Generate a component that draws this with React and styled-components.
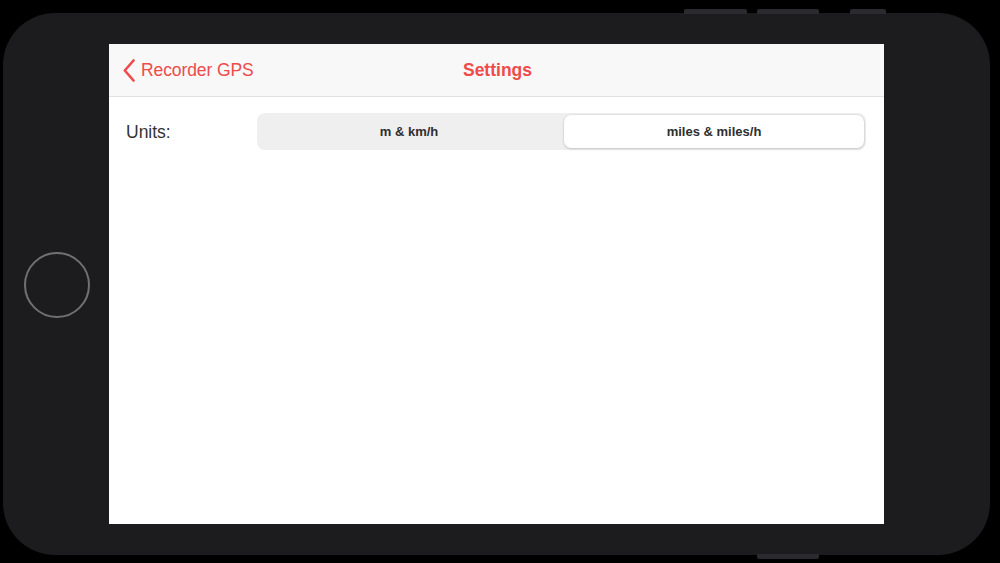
import React, { useState } from "react";
import styled, { createGlobalStyle } from "styled-components";

const Global = createGlobalStyle`
  html, body { margin: 0; padding: 0; background: #000; }
  body { width: 1000px; height: 563px; overflow: hidden; font-family: "Liberation Sans", Arial, sans-serif; }
  * { box-sizing: border-box; }
`;

const Stage = styled.div`
  width: 1000px;
  height: 563px;
  background: #000;
  padding: 13px 10px 8px 3px;
`;

const Body = styled.div`
  position: relative;
  width: 987px;
  height: 542px;
  background: #1c1b1e;
  border-radius: 52px;
  display: flex;
  align-items: stretch;
`;

const HwButton = styled.div`
  position: absolute;
  height: 5px;
  background: #2b2a2e;
  border-radius: 2px 2px 0 0;
  left: ${(p) => p.$left}px;
  width: ${(p) => p.$width}px;
  ${(p) => (p.$bottom ? "bottom: -4px; border-radius: 0 0 2px 2px;" : "top: -4px;")}
`;

const HomeColumn = styled.div`
  width: 106px;
  display: flex;
  align-items: center;
  justify-content: center;
  padding: 2px 0 0 2px;
`;

const HomeButton = styled.div`
  width: 66px;
  height: 66px;
  border-radius: 50%;
  border: 2.5px solid #707072;
`;

const Screen = styled.div`
  margin: 31px 0;
  width: 775px;
  background: #fff;
  display: flex;
  flex-direction: column;
`;

const NavBar = styled.div`
  height: 53px;
  background: #f8f8f8;
  border-bottom: 1px solid #e2e2e2;
  display: grid;
  grid-template-columns: 1fr auto 1fr;
  align-items: center;
  padding: 0 12px 0 14px;
`;

const BackButton = styled.div`
  display: flex;
  align-items: center;
  gap: 6px;
  color: #ee4b4b;
  font-size: 17.5px;
  letter-spacing: -0.1px;
`;

const Title = styled.div`
  color: #ee4b4b;
  font-size: 17.5px;
  font-weight: 700;
`;

const Content = styled.div`
  padding: 16px 18px 0 17px;
`;

const Row = styled.div`
  display: flex;
  align-items: center;
`;

const Label = styled.div`
  width: 131px;
  font-size: 17.5px;
  color: #333;
  padding-top: 2px;
`;

const Segmented = styled.div`
  flex: 1;
  height: 37px;
  background: #efeff0;
  border-radius: 8px;
  padding: 2px;
  display: grid;
  grid-template-columns: 1fr 1fr;
  gap: 5px;
`;

const Segment = styled.div`
  display: flex;
  align-items: center;
  justify-content: center;
  border-radius: 7px;
  font-size: 13px;
  font-weight: 700;
  color: #2e2e2e;
  cursor: pointer;
  background: ${(p) => (p.$active ? "#fff" : "transparent")};
  box-shadow: ${(p) => (p.$active ? "0 1px 3px rgba(0,0,0,0.16), 0 0 0 0.5px rgba(0,0,0,0.06)" : "none")};
`;

export default function App() {
  const [unit, setUnit] = useState(1);
  const options = ["m & km/h", "miles & miles/h"];
  return (
    <>
      <Global />
      <Stage>
        <Body>
          <HwButton $left={681} $width={63} />
          <HwButton $left={754} $width={62} />
          <HwButton $left={847} $width={36} />
          <HwButton $left={754} $width={62} $bottom />
          <HomeColumn>
            <HomeButton />
          </HomeColumn>
          <Screen>
            <NavBar>
              <BackButton>
                <svg width="12" height="23" viewBox="0 0 12 23" fill="none">
                  <path d="M10.5 1.5 L1.8 11.5 L10.5 21.5" stroke="#ee4b4b" strokeWidth="2.6" strokeLinecap="round" strokeLinejoin="round" />
                </svg>
                Recorder GPS
              </BackButton>
              <Title>Settings</Title>
              <div />
            </NavBar>
            <Content>
              <Row>
                <Label>Units:</Label>
                <Segmented>
                  {options.map((o, i) => (
                    <Segment key={o} $active={unit === i} onClick={() => setUnit(i)}>
                      {o}
                    </Segment>
                  ))}
                </Segmented>
              </Row>
            </Content>
          </Screen>
        </Body>
      </Stage>
    </>
  );
}
